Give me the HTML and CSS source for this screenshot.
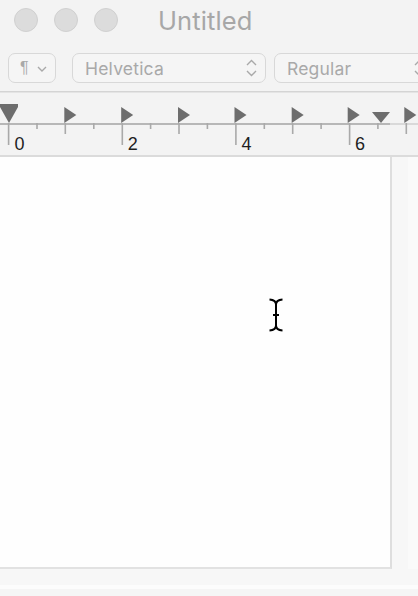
FILE: index.html
```html
<!DOCTYPE html>
<html>
<head>
<meta charset="utf-8">
<link rel="stylesheet" href="styles.css">
</head>
<body>
<div class="window">
  <div class="titlebar">
    <div class="lights">
      <span class="light"></span>
      <span class="light"></span>
      <span class="light"></span>
    </div>
    <div class="title">Untitled</div>
  </div>
  <div class="toolbar">
    <div class="popup para">
      <span class="pilcrow">¶</span>
      <svg class="chev-down" width="10" height="6" viewBox="0 0 10 6"><path d="M1 1 L5 5 L9 1" fill="none" stroke="#a9a9a9" stroke-width="1.4"/></svg>
    </div>
    <div class="popup font">
      <span class="label">Helvetica</span>
      <svg class="updown" width="11" height="18" viewBox="0 0 11 18"><path d="M1 6 L5.5 1.5 L10 6 M1 12 L5.5 16.5 L10 12" fill="none" stroke="#a9a9a9" stroke-width="1.4"/></svg>
    </div>
    <div class="popup style">
      <span class="label">Regular</span>
      <svg class="updown" width="11" height="18" viewBox="0 0 11 18"><path d="M1 6 L5.5 1.5 L10 6 M1 12 L5.5 16.5 L10 12" fill="none" stroke="#a9a9a9" stroke-width="1.4"/></svg>
    </div>
  </div>
  <div class="ruler">
    <svg width="418" height="62" viewBox="0 0 418 62">
      <rect x="0" y="30" width="390" height="2" fill="#b7b7b7"/>
      <rect x="390" y="30" width="28" height="2" fill="#d9d9d9"/>
      <!-- major ticks -->
      <rect x="7.8" y="30" width="1.6" height="22" fill="#a9a9a9"/>
      <rect x="121.5" y="30" width="1.6" height="22" fill="#a9a9a9"/>
      <rect x="235.1" y="30" width="1.6" height="22" fill="#a9a9a9"/>
      <rect x="348.8" y="30" width="1.6" height="22" fill="#a9a9a9"/>
      <!-- medium ticks -->
      <rect x="64.5" y="30" width="1.6" height="11" fill="#a9a9a9"/>
      <rect x="178.2" y="30" width="1.6" height="11" fill="#a9a9a9"/>
      <rect x="291.9" y="30" width="1.6" height="11" fill="#a9a9a9"/>
      <rect x="405.5" y="30" width="1.6" height="11" fill="#a9a9a9"/>
      <!-- small ticks -->
      <rect x="36.2" y="30" width="1.6" height="6" fill="#a9a9a9"/>
      <rect x="93" y="30" width="1.6" height="6" fill="#a9a9a9"/>
      <rect x="149.8" y="30" width="1.6" height="6" fill="#a9a9a9"/>
      <rect x="206.6" y="30" width="1.6" height="6" fill="#a9a9a9"/>
      <rect x="263.5" y="30" width="1.6" height="6" fill="#a9a9a9"/>
      <rect x="320.3" y="30" width="1.6" height="6" fill="#a9a9a9"/>
      <rect x="377.1" y="30" width="1.6" height="6" fill="#a9a9a9"/>
      <!-- tab stops -->
      <g fill="#6d6d6d">
        <polygon points="64.3,14 76.3,22 64.3,30"/>
        <polygon points="121.2,14 133.2,22 121.2,30"/>
        <polygon points="178,14 190,22 178,30"/>
        <polygon points="234.5,14 246.5,22 234.5,30"/>
        <polygon points="291.7,14 303.7,22 291.7,30"/>
        <polygon points="347.7,14 359.7,22 347.7,30"/>
        <polygon points="404.3,14 416.3,22 404.3,30"/>
        <!-- left margin marker -->
        <rect x="0" y="11" width="18" height="3"/>
        <polygon points="0,14 18,14 9,30"/>
        <!-- right margin marker -->
        <polygon points="372,19 390,19 381,30"/>
      </g>
      <text class="num" x="14.5" y="57">0</text>
      <text class="num" x="127.8" y="57">2</text>
      <text class="num" x="241.5" y="57">4</text>
      <text class="num" x="355" y="57">6</text>
    </svg>
  </div>
  <div class="docarea">
    <div class="page">
      <svg class="ibeam" width="16" height="34" viewBox="0 0 16 34"><path d="M1.5 1.5 Q8 2 8 6.5 Q8 2 14.5 1.5 M8 6.5 V27.5 M1.5 32.5 Q8 32 8 27.5 Q8 32 14.5 32.5 M5 17 H11" fill="none" stroke="#000" stroke-width="2"/></svg>
    </div>
    <div class="gutter"></div>
  </div>
  <div class="bottom"></div>
</div>
</body>
</html>
```
FILE: styles.css
```css
html, body {
  margin: 0;
  padding: 0;
  background: #f6f6f6;
}
.window {
  width: 418px;
  height: 596px;
  overflow: hidden;
  display: flex;
  flex-direction: column;
  background: #f7f7f7;
  font-family: Inter, "Liberation Sans", sans-serif;
}
.titlebar {
  height: 40px;
  flex: none;
  display: flex;
  align-items: center;
  background: #f3f3f3;
}
.lights {
  display: flex;
  gap: 16px;
  padding-left: 14px;
}
.light {
  width: 22px;
  height: 22px;
  border-radius: 50%;
  background: #dcdcdc;
  border: 1px solid #d0d0d0;
}
.title {
  margin-left: 40px;
  font-size: 25.5px;
  color: #a7a7a7;
  letter-spacing: 0.1px;
  margin-top: 1px;
}
.toolbar {
  height: 52px;
  flex: none;
  box-sizing: border-box;
  display: flex;
  align-items: flex-start;
  gap: 8px;
  padding: 13px 0 0 8px;
  background: #f3f3f3;
  border-bottom: 1px solid #d4d4d4;
}
.popup {
  height: 30px;
  box-sizing: border-box;
  flex: none;
  display: flex;
  align-items: center;
  border: 1px solid #d8d8d8;
  border-radius: 7px;
  background: #f5f5f5;
  color: #a9a9a9;
}
.para {
  width: 48px;
  padding-left: 11px;
  gap: 8px;
}
.pilcrow {
  font-size: 16px;
  font-family: "Liberation Sans", sans-serif;
  color: #a9a9a9;
}
.chev-down {
  margin-top: 1px;
}
.font {
  width: 194px;
  margin-left: 8px;
  padding: 0 8px 0 12px;
  justify-content: space-between;
}
.style {
  width: 160px;
  padding: 0 8px 0 12px;
  justify-content: space-between;
}
.label {
  font-size: 17.5px;
  letter-spacing: 0.2px;
}
.ruler {
  height: 62px;
  flex: none;
  background: #f3f3f3;
  border-bottom: 2px solid #dbdbdb;
  border-top: 1px solid #e4e4e4;
}
.ruler svg {
  display: block;
}
.num {
  font-family: "Liberation Sans", Arial, sans-serif;
  font-size: 18px;
  fill: #1f1f1f;
}
.docarea {
  display: flex;
  flex: none;
  height: 412px;
}
.page {
  width: 390px;
  height: 410px;
  background: #fefefe;
  border-right: 2px solid #dedede;
  border-bottom: 2px solid #e2e2e2;
  position: relative;
}
.ibeam {
  position: absolute;
  left: 268px;
  top: 141px;
}
.gutter {
  flex: 1;
  background: linear-gradient(to right, #f7f7f7 0, #f7f7f7 16px, #fafafa 16px);
}
.bottom {
  flex: 1;
  background: linear-gradient(to bottom, #f7f7f7 0, #f7f7f7 16px, #fcfcfc 16px, #fcfcfc 20px, #f5f5f5 20px);
}
```
